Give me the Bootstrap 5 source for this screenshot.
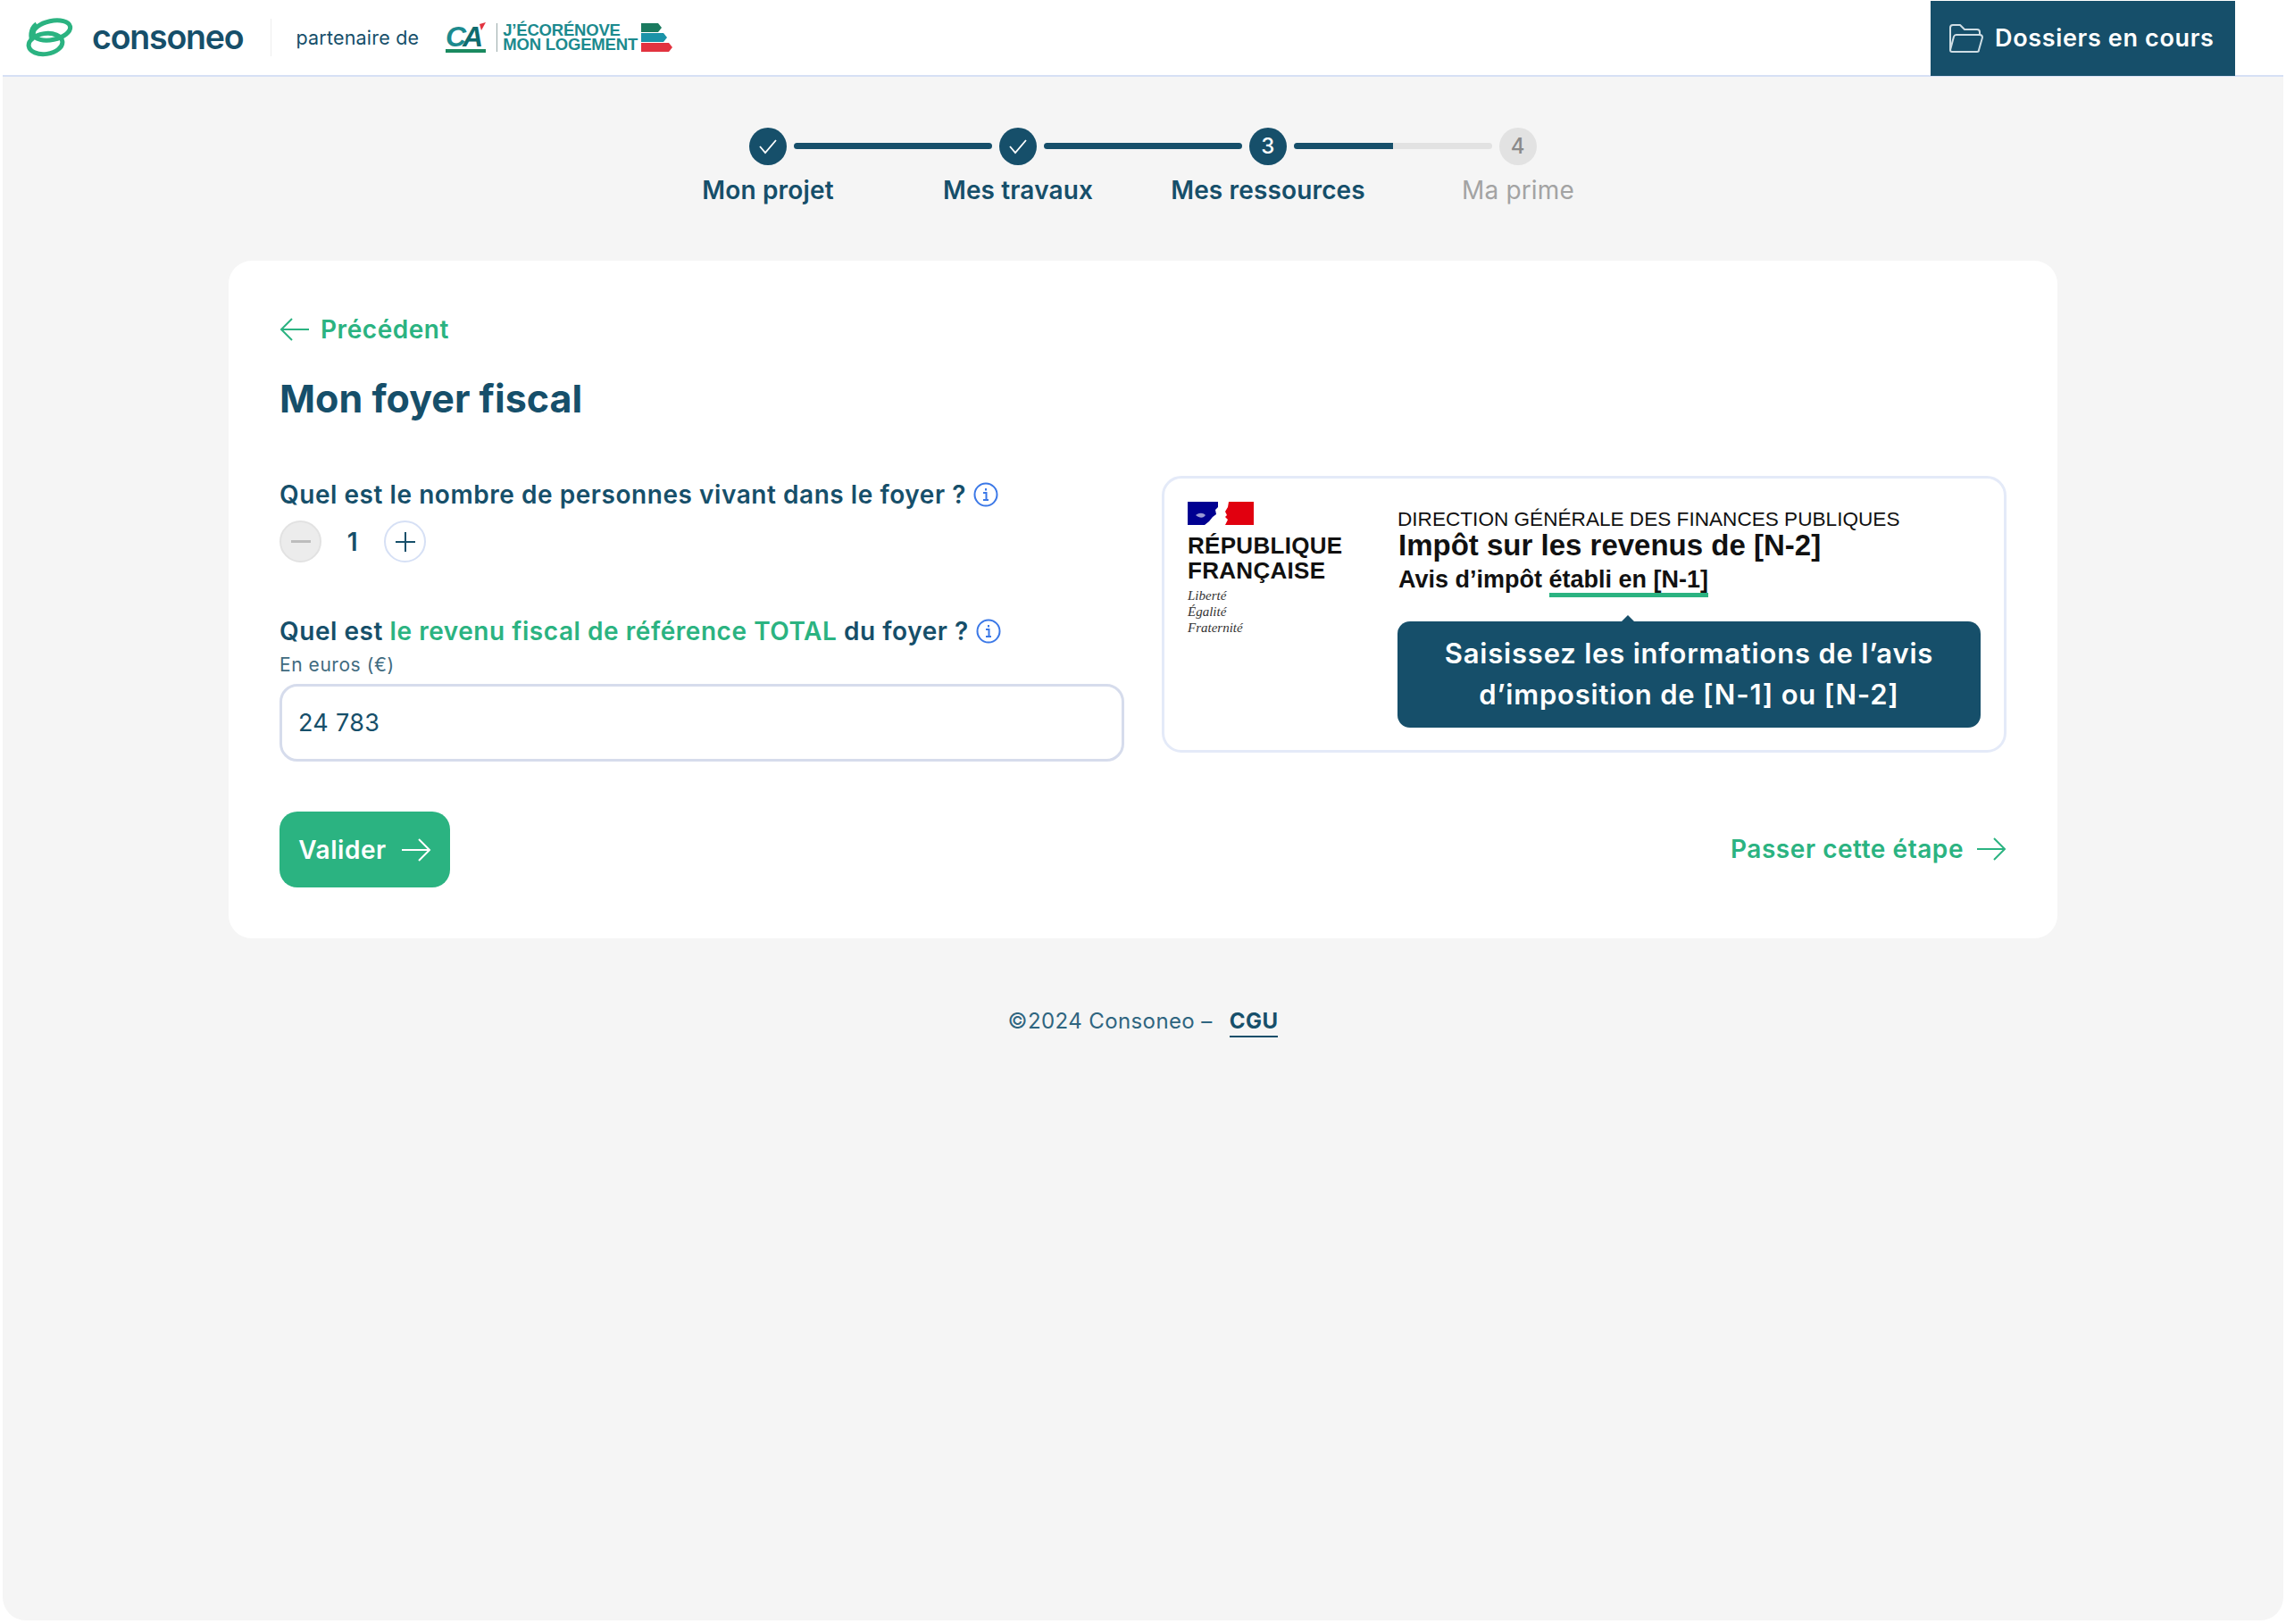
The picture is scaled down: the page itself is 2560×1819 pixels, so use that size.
<!DOCTYPE html>
<html lang="fr">
<head>
  <meta charset="UTF-8" />
  <meta name="viewport" content="width=device-width, initial-scale=1" />
  <title>Consoneo - Mon foyer fiscal</title>
  <link href="https://cdn.jsdelivr.net/npm/bootstrap@5.3.0/dist/css/bootstrap.min.css" rel="stylesheet" />
  <style>
    body { background: #fff; font-family: "Inter", "Liberation Sans", sans-serif; color: #164f6a; overflow: hidden; letter-spacing: .55px; }
    .appli { margin: 0 3px 4px 3px; height: 1815px; background: #f5f5f5; border-radius: 0 0 26px 26px; }
    .entete { height: 86px; background: #fff; border-bottom: 2px solid #d6e0f5; padding-left: 25px; padding-right: 54px; }
    .logo-mot { font-weight: 600; font-size: 37.500px; letter-spacing: -1.200px; color: #164f6a; margin-left: 21px; line-height: 1; }
    .separe { width: 1px; height: 42px; background: #eee; margin: 0 27px 0 31px; }
    .partenaire { font-size: 21.500px; color: #164f6a; margin-right: 30px; letter-spacing: .2px; }
    .jeco { font-family: "Liberation Sans", sans-serif; font-weight: 700; font-size: 18.500px; line-height: 16px; color: #1c8a8e; border-left: 1px solid #9aa; padding-left: 6px; margin-left: 11px; letter-spacing: -.2px; }
    .btn-dossiers { height: 84px; width: 341px; border-radius: 0; background: #164f6a; color: #fff; font-weight: 600; font-size: 27px; letter-spacing: .65px; padding: 0 0 0 19px; gap: 13px; border: 0; margin-top: 2px; }
    .btn-dossiers:hover { background: #164f6a; color: #fff; }
    .etapes { width: 1120px; margin: 57px auto 0; }
    .etape { width: 280px; }
    .rond { width: 42px; height: 42px; border-radius: 50%; background: #164f6a; color: #fff; font-size: 24px; font-weight: 500; }
    .rond-off { background: #e2e2e2; color: #8a8a8a; }
    .trait { position: absolute; top: 17px; left: 169px; width: 222px; height: 7px; border-radius: 4px; background: #e2e2e2; overflow: hidden; }
    .trait-plein { height: 100%; background: #164f6a; }
    .etape-nom { font-size: 28px; font-weight: 600; margin-top: 11px; line-height: 34px; letter-spacing: .15px; }
    .etape-off { color: #a3a3a3; font-weight: 400; }
    .carte { width: 2048px; margin: 62px auto 0; background: #fff; border: 0; border-radius: 26px; padding: 60px 57px 57px; height: 759px; }
    .lien-vert { color: #2bb381; font-weight: 600; font-size: 28px; text-decoration: none; line-height: 34px; }
    .precedent { gap: 12px; }
    .titre { font-size: 43px; font-weight: 700; line-height: 50px; margin: 35px 0 0; color: #164f6a; letter-spacing: 0; }
    .colonne-form { width: 946px; }
    .question { font-size: 28px; font-weight: 600; line-height: 34px; margin: 0; color: #164f6a; }
    .vert { color: #2bb381; }
    .compteur { width: 47px; height: 47px; border-radius: 50%; border: 2px solid #d6e0f5; background: #fff; }
    .compteur-off { background: #ececec; border-color: #e2e2e2; }
    .valeur { width: 70px; text-align: center; font-size: 28px; font-weight: 600; }
    .precision { font-size: 21px; line-height: 26px; margin: 8px 0 8px; color: #3f6b80; }
    .champ { height: 87px; border: 3px solid #d6dcec; border-radius: 20px; font-size: 27px; color: #164f6a; padding: 0 18px; letter-spacing: .3px; }
    .btn-valider { width: 191px; height: 85px; border-radius: 20px; background: #2bb381; border: 0; color: #fff; font-weight: 600; font-size: 28px; gap: 16px; margin-top: 56px; padding: 0; letter-spacing: .55px; }
    .btn-valider:hover { background: #2bb381; color: #fff; }
    .exemple { width: 946px; height: 310px; border: 3px solid #e4eaf8; border-radius: 22px; margin-top: 62px; padding: 25px 26px; }
    .rf-bloc { width: 235px; flex: none; }
    .rf-nom { font-family: "Liberation Sans", sans-serif; font-weight: 700; font-size: 26px; line-height: 28px; color: #111; margin-top: 9px; letter-spacing: .3px; }
    .rf-devise { font-family: "Liberation Serif", serif; font-style: italic; font-size: 15px; line-height: 18px; color: #333; margin-top: 5px; letter-spacing: 0; }
    .avis { width: 654px; font-family: "Liberation Sans", sans-serif; color: #111; padding-top: 8px; letter-spacing: 0; }
    .avis-a { font-size: 22.600px; line-height: 26px; }
    .avis-b { font-size: 33px; font-weight: 700; line-height: 32px; padding-left: 1px; }
    .avis-c { font-size: 27px; font-weight: 700; line-height: 34px; margin-top: 5px; padding-left: 1px; }
    .souligne { border-bottom: 5px solid #2bb381; }
    .bulle { position: relative; background: #164f6a; color: #fff; border-radius: 14px; height: 119px; margin-top: 30px; font-family: "Inter", sans-serif; font-weight: 600; font-size: 31px; letter-spacing: .8px; line-height: 46px; text-align: center; padding-top: 13px; }
    .bulle::before { content: ""; position: absolute; top: -7px; left: 251px; border-left: 7px solid transparent; border-right: 7px solid transparent; border-bottom: 7px solid #164f6a; }
    .bas-page { font-size: 24px; letter-spacing: .4px; color: #2f6580; margin-top: 75px; line-height: 36px; }
    .bas-page a { color: #164f6a; font-weight: 700; text-decoration: none; border-bottom: 2px solid #164f6a; margin-left: 12px; padding-bottom: 2px; }
  </style>
</head>
<body>
  <div class="appli">
    <header class="entete d-flex align-items-center">
      <svg width="54" height="44" viewBox="0 0 54 44" fill="none" stroke="#2bb381" stroke-width="5">
        <ellipse cx="30" cy="14" rx="21" ry="10.500" transform="rotate(-12 30 14)"/>
        <ellipse cx="23" cy="29" rx="19" ry="11.500" transform="rotate(-8 23 29)"/>
        <path d="M8 26C5 18 8 10 13 7"/>
      </svg>
      <span class="logo-mot">consoneo</span>
      <span class="separe"></span>
      <span class="partenaire">partenaire de</span>
      <svg width="46" height="36" viewBox="0 0 46 36">
        <text x="0" y="28" font-family="Liberation Sans" font-weight="700" font-style="italic" font-size="32" letter-spacing="-4" fill="#1c8a8e">C<tspan fill="#0f6b6d">A</tspan></text>
        <path d="M38 3 45 1 40 10z" fill="#e2333f"/>
        <rect x="0" y="31" width="45" height="4" fill="#1a8a5f"/>
      </svg>
      <div class="jeco"><div>J’ÉCORÉNOVE</div><div>MON LOGEMENT</div></div>
      <svg class="ms-1" width="36" height="32" viewBox="0 0 36 32">
        <path d="M0 0h19l4 5-4 5H0z" fill="#1a7a5f"/>
        <path d="M0 11h25l4 5-4 5H0z" fill="#1a93a8"/>
        <path d="M0 22h31l4 5-4 5H0z" fill="#e2333f"/>
      </svg>
      <button class="btn btn-dossiers d-flex align-items-center ms-auto" type="button">
        <svg width="40" height="32" viewBox="0 0 40 32" fill="none" stroke="#cfdde4" stroke-width="2" stroke-linejoin="round">
          <path d="M3 29V4a3 3 0 0 1 3-3h8l5 5h14a3 3 0 0 1 3 3v3"/>
          <path d="M3 29 7 14a3 3 0 0 1 3-2h26a3 3 0 0 1 3 3l-4 14a2 2 0 0 1-2 2H5a2 2 0 0 1-2-2z"/>
        </svg>
        Dossiers en cours
      </button>
    </header>

    <div class="etapes d-flex">
      <div class="etape position-relative text-center">
        <div class="rond d-inline-flex align-items-center justify-content-center"><svg width="22" height="18" viewBox="0 0 22 18" fill="none" stroke="#fff" stroke-width="1.800"><path d="M2 9l6 7L20 2"/></svg></div>
        <div class="trait"><div class="trait-plein" style="width: 100%"></div></div>
        <div class="etape-nom">Mon projet</div>
      </div>
      <div class="etape position-relative text-center">
        <div class="rond d-inline-flex align-items-center justify-content-center"><svg width="22" height="18" viewBox="0 0 22 18" fill="none" stroke="#fff" stroke-width="1.800"><path d="M2 9l6 7L20 2"/></svg></div>
        <div class="trait"><div class="trait-plein" style="width: 100%"></div></div>
        <div class="etape-nom">Mes travaux</div>
      </div>
      <div class="etape position-relative text-center">
        <div class="rond d-inline-flex align-items-center justify-content-center">3</div>
        <div class="trait"><div class="trait-plein" style="width: 50%"></div></div>
        <div class="etape-nom">Mes ressources</div>
      </div>
      <div class="etape text-center">
        <div class="rond rond-off d-inline-flex align-items-center justify-content-center">4</div>
        <div class="etape-nom etape-off">Ma prime</div>
      </div>
    </div>

    <main class="carte card">
      <a href="#" class="lien-vert precedent d-inline-flex align-items-center align-self-start">
        <svg width="34" height="28" viewBox="0 0 34 28" fill="none" stroke="#2bb381" stroke-width="2"><path d="M33 14H2M14 2 2 14l12 12"/></svg>
        Précédent
      </a>
      <h1 class="titre">Mon foyer fiscal</h1>
      <div class="d-flex justify-content-between">
        <div class="colonne-form">
          <p class="question d-flex align-items-center gap-2" style="margin-top: 66px">Quel est le nombre de personnes vivant dans le foyer ?
            <svg width="28" height="28" viewBox="0 0 28 28" fill="none" stroke="#3b78e7" stroke-width="2"><circle cx="14" cy="14" r="12.500"/><path d="M11 12h3.500v8M11 20h6M14 7v2.500"/></svg>
          </p>
          <div class="d-flex align-items-center" style="margin-top: 12px">
            <span class="compteur compteur-off d-flex align-items-center justify-content-center"><svg width="22" height="4" viewBox="0 0 22 4"><rect width="22" height="3" fill="#bdbdbd"/></svg></span>
            <span class="valeur">1</span>
            <span class="compteur d-flex align-items-center justify-content-center"><svg width="24" height="24" viewBox="0 0 24 24" stroke="#164f6a" stroke-width="2"><path d="M12 1v22M1 12h22"/></svg></span>
          </div>
          <p class="question d-flex align-items-center gap-2" style="margin-top: 60px"><span>Quel est <span class="vert">le revenu fiscal de référence TOTAL</span> du foyer ?</span>
            <svg width="28" height="28" viewBox="0 0 28 28" fill="none" stroke="#3b78e7" stroke-width="2"><circle cx="14" cy="14" r="12.500"/><path d="M11 12h3.500v8M11 20h6M14 7v2.500"/></svg>
          </p>
          <p class="precision">En euros (€)</p>
          <input class="form-control champ" type="text" value="24 783" aria-label="Revenu fiscal" />
          <button class="btn btn-valider d-flex align-items-center justify-content-center" type="button">Valider
            <svg width="34" height="28" viewBox="0 0 34 28" fill="none" stroke="#fff" stroke-width="2"><path d="M1 14h31M20 2l12 12-12 12"/></svg>
          </button>
        </div>
        <div class="d-flex flex-column align-items-end">
          <div class="exemple d-flex">
            <div class="rf-bloc">
              <svg width="74" height="26" viewBox="0 0 74 26">
                <path d="M0 0h34v6l-3 3 1 5-4 3-4 5-5 4H0z" fill="#000091"/>
                <path d="M9 15c4-3 8-3 11 0-2 3-6 4-11 0z" fill="#fff" opacity=".6"/>
                <path d="M46 0h28v26H42l3-6-3-3 2-2-2-4 3-5z" fill="#e1000f"/>
              </svg>
              <div class="rf-nom">RÉPUBLIQUE<br />FRANÇAISE</div>
              <div class="rf-devise">Liberté<br />Égalité<br />Fraternité</div>
            </div>
            <div class="avis">
              <div class="avis-a">DIRECTION GÉNÉRALE DES FINANCES PUBLIQUES</div>
              <div class="avis-b">Impôt sur les revenus de [N-2]</div>
              <div class="avis-c">Avis d’impôt <span class="souligne">établi en [N-1]</span></div>
              <div class="bulle">Saisissez les informations de l’avis<br />d’imposition de [N-1] ou [N-2]</div>
            </div>
          </div>
          <a href="#" class="lien-vert d-inline-flex align-items-center mt-auto" style="margin-bottom: 26px; gap: 14px">Passer cette étape
            <svg width="34" height="28" viewBox="0 0 34 28" fill="none" stroke="#2bb381" stroke-width="2"><path d="M1 14h31M20 2l12 12-12 12"/></svg>
          </a>
        </div>
      </div>
    </main>

    <footer class="bas-page text-center">©2024 Consoneo – <a href="#">CGU</a></footer>
  </div>
  <script src="https://cdn.jsdelivr.net/npm/bootstrap@5.3.0/dist/js/bootstrap.bundle.min.js"></script>
</body>
</html>
